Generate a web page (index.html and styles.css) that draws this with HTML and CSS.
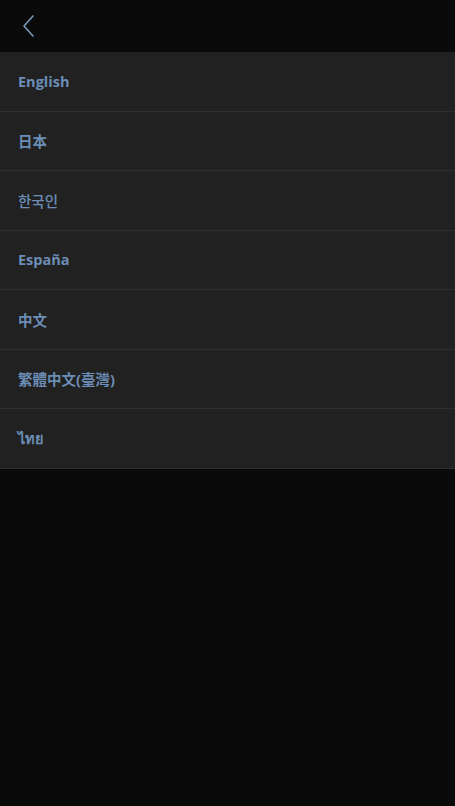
FILE: index.html
```html
<!DOCTYPE html>
<html lang="en">
<head>
    <meta charset="UTF-8">
    <meta name="viewport" content="width=device-width, initial-scale=1.0">
    <title>Language</title>
    <link rel="stylesheet" href="styles.css">
</head>
<body>
    <div class="header">
        <button class="back-btn" aria-label="Back">
            <svg width="14" height="24" viewBox="0 0 14 24" fill="none">
                <path d="M12 2 L3 12 L12 22" stroke="#7a9ab9" stroke-width="1.6" stroke-linecap="round" stroke-linejoin="round"/>
            </svg>
        </button>
    </div>

    <ul class="lang-list">
        <li class="lang-item">English</li>
        <li class="lang-item">日本</li>
        <li class="lang-item light">한국인</li>
        <li class="lang-item">España</li>
        <li class="lang-item">中文</li>
        <li class="lang-item">繁體中文(臺灣)</li>
        <li class="lang-item">ไทย</li>
    </ul>
</body>
</html>
```

FILE: styles.css
```css
* { margin: 0; padding: 0; box-sizing: border-box; }
html, body { height: 100%; }
body { background: #0a0a0a; font-family: "Open Sans", "Noto Sans", "Noto Sans CJK TC", "Noto Sans CJK KR", sans-serif; }

.header { height: 52px; display: flex; align-items: center; padding-left: 20px; background: #0a0a0a; }
.back-btn { background: none; border: none; width: 16px; height: 26px; display: flex; align-items: center; justify-content: center; cursor: pointer; }

.lang-list { list-style: none; background: #212121; }
.lang-item { height: 59.5px; display: flex; align-items: center; padding-left: 18px; color: #6c8db5; font-size: 14.5px; font-weight: 700; border-bottom: 1px solid #2d2d36; }
.lang-item.light { font-weight: 500; }
```
